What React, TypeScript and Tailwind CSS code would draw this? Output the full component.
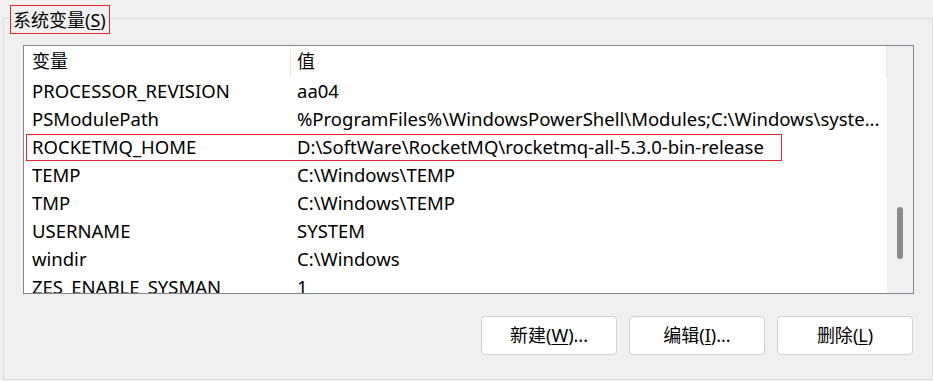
import React from 'react'

const rows = [
    { name: 'PROCESSOR_REVISION', value: 'aa04' },
    { name: 'PSModulePath', value: '%ProgramFiles%\\WindowsPowerShell\\Modules;C:\\Windows\\syste...' },
    { name: 'ROCKETMQ_HOME', value: 'D:\\SoftWare\\RocketMQ\\rocketmq-all-5.3.0-bin-release', mark: true },
    { name: 'TEMP', value: 'C:\\Windows\\TEMP' },
    { name: 'TMP', value: 'C:\\Windows\\TEMP' },
    { name: 'USERNAME', value: 'SYSTEM' },
    { name: 'windir', value: 'C:\\Windows' },
    { name: 'ZES_ENABLE_SYSMAN', value: '1' },
]

const Btn = ({ label, hot, tail }: { label: string; hot: string; tail: string }) => (
    <button className="w-[136px] h-[39px] bg-white border border-[#d0d0d0] rounded-[4px] flex items-center justify-center text-[18px] text-black">
        {label}(<span className="underline underline-offset-2">{hot}</span>){tail}
    </button>
)

const App = () => {
    return (
        <div className="w-[933px] h-[381px] bg-[#f0f0f0] relative overflow-hidden text-black font-['Noto_Sans','Noto_Sans_CJK_SC',sans-serif]">
            {/* group label sits over the frame line */}
            <div className="absolute left-[10px] top-[5px] w-[100px] h-[29px] border border-[#e3262b] bg-[#f0f0f0] pl-[2px] flex items-center text-[18px] leading-none">
                系统变量(<span className="underline underline-offset-2">S</span>)
            </div>
            <div className="ml-[3px] mt-[18px] w-[930px] h-[362px] border border-[#dcdcdc] pt-[26px] pl-[19px] pr-[18px] flex flex-col">
                <div className="w-[891px] h-[249px] border border-[#82868f] flex flex-row overflow-hidden">
                    <div className="w-[863px] h-full bg-white flex flex-col overflow-hidden">
                        <div className="h-[31px] shrink-0 flex flex-row items-center border-r border-[#e5e5e5] text-[18px]">
                            <span className="w-[266px] h-full flex items-center pl-[8px]">变量</span>
                            <span className="h-full pt-[1px] pb-[1px]"><span className="block w-px h-full bg-[#e5e5e5]"></span></span>
                            <span className="flex-1 h-full flex items-center pl-[6px]">值</span>
                        </div>
                        {rows.map((r, ind) => (
                            <div key={ind} className="h-[28px] shrink-0 flex flex-row items-center relative text-[18.5px] whitespace-nowrap">
                                <span className="w-[266px] pl-[8px] overflow-hidden">{r.name}</span>
                                <span className="w-px"></span>
                                <span className="flex-1 pl-[6px] overflow-hidden">{r.value}</span>
                                {r.mark && <span className="absolute left-[2px] top-[1px] w-[756px] h-[27px] border border-[#e3262b]"></span>}
                            </div>
                        ))}
                    </div>
                    <div className="w-[26px] h-full bg-[#f0f0f0] pt-[161px] pl-[10px]">
                        <div className="w-[6px] h-[52px] rounded-full bg-[#8a8a8a]"></div>
                    </div>
                </div>
                <div className="flex flex-row justify-end gap-[12px] mt-[22px] pr-[1px]">
                    <Btn label="新建" hot="W" tail="..." />
                    <Btn label="编辑" hot="I" tail="..." />
                    <Btn label="删除" hot="L" tail="" />
                </div>
            </div>
        </div>
    )
}

export default App
